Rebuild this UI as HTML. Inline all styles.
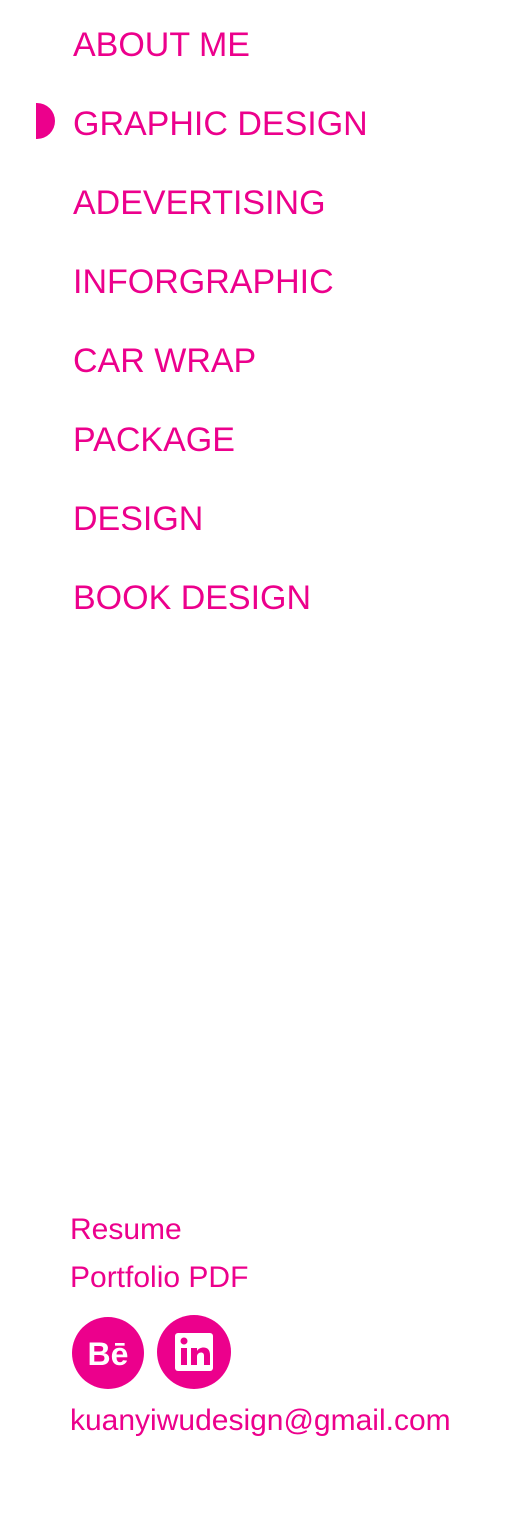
<!DOCTYPE html>
<html><head><style>
body{margin:0;width:507px;height:1535px;background:#fff;position:relative;font-family:"Liberation Sans",Arial,sans-serif;color:#ec008c;overflow:hidden}
.n{position:absolute;left:73px;font-size:34px;line-height:34px;white-space:nowrap}
.s{position:absolute;left:70px;font-size:30px;line-height:30px;white-space:nowrap}
</style></head><body>
<div class="n" style="top:28px">ABOUT ME</div>
<div style="position:absolute;left:36px;top:103px;width:19px;height:36px;background:#ec008c;border-radius:0 19px 19px 0"></div>
<div class="n" style="top:107px">GRAPHIC DESIGN</div>
<div class="n" style="top:186px">ADEVERTISING</div>
<div class="n" style="top:265px">INFORGRAPHIC</div>
<div class="n" style="top:344px">CAR WRAP</div>
<div class="n" style="top:423px">PACKAGE</div>
<div class="n" style="top:502px">DESIGN</div>
<div class="n" style="top:581px">BOOK DESIGN</div>
<div class="s" style="top:1215px">Resume</div>
<div class="s" style="top:1263px">Portfolio PDF</div>
<svg style="position:absolute;left:0;top:0" width="507" height="1535">
<circle cx="108" cy="1353" r="36" fill="#ec008c"/>
<text x="108" y="1365" text-anchor="middle" font-family="Liberation Sans" font-weight="bold" font-size="32" fill="#fff">Bē</text>
<circle cx="194" cy="1352" r="37" fill="#ec008c"/>
<rect x="175" y="1333" width="38" height="38" rx="3" fill="#fff"/>
<rect x="181" y="1348" width="6" height="17" fill="#ec008c"/>
<circle cx="184" cy="1341" r="3.5" fill="#ec008c"/>
<path d="M191 1348h6v3c1.5-2.5 4-3.5 6.5-3.5 4 0 6.5 2.5 6.5 7.5v10h-6v-9c0-2.5-1-3.5-3-3.5s-4 1.5-4 4v8.5h-6z" fill="#ec008c"/>
</svg>
<div class="s" style="top:1406px">kuanyiwudesign@gmail.com</div>
</body></html>
